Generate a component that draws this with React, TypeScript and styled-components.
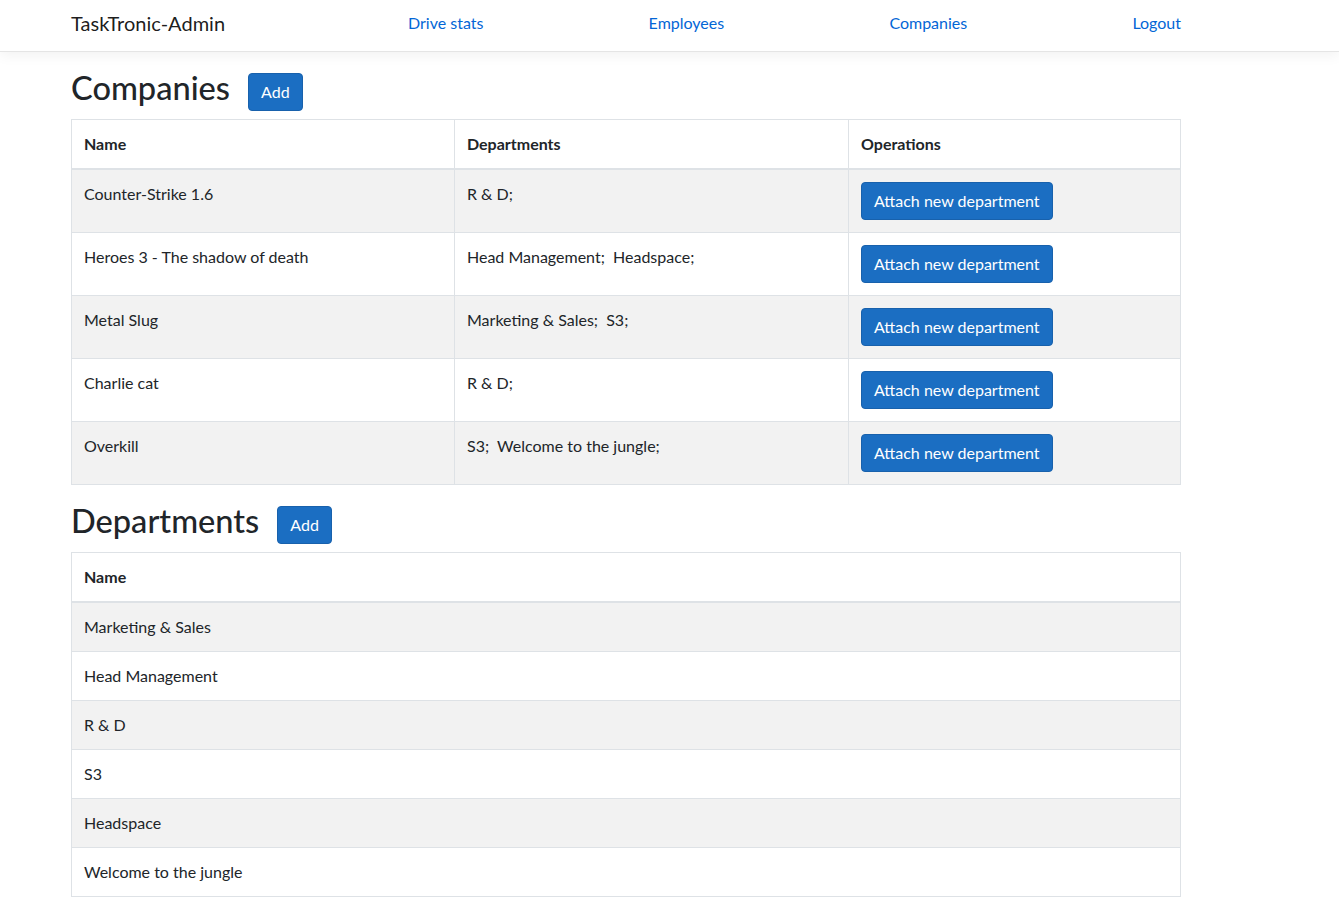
import styled, { createGlobalStyle } from 'styled-components';

const GlobalStyle = createGlobalStyle`
  body {
    margin: 0;
    background: #fff;
    color: #212529;
    font-family: Lato, "Noto Sans", sans-serif;
    font-size: 16px;
    line-height: 1.5;
  }
  * {
    box-sizing: border-box;
  }
`;

const NavBar = styled.header`
  height: 52px;
  border-bottom: 1px solid #e5e5e5;
  box-shadow: 0 4px 12px rgba(0, 0, 0, 0.05);
  background: #fff;
`;

const NavInner = styled.div`
  display: flex;
  align-items: center;
  width: 1110px;
  height: 100%;
  margin-left: 71px;
  padding-bottom: 5px;
`;

const Brand = styled.a`
  font-size: 20px;
  color: rgba(0, 0, 0, 0.9);
  text-decoration: none;
  width: 337px;
  flex-shrink: 0;
`;

const NavList = styled.nav`
  flex: 1;
  display: flex;
  justify-content: space-between;
`;

const NavLink = styled.a`
  color: #0366d6;
  text-decoration: none;
  font-size: 16px;
`;

const Main = styled.main`
  width: 1110px;
  margin-left: 71px;
  padding-top: 21px;
`;

const SectionHeader = styled.div<{ $first?: boolean }>`
  display: flex;
  align-items: flex-start;
  gap: 18px;
  margin-top: ${(p) => (p.$first ? '0' : '21px')};
  margin-bottom: 8px;
`;

const Title = styled.h2`
  margin: -4px 0 0;
  font-size: 32.6px;
  font-weight: 500;
  line-height: 38px;
`;

const PrimaryButton = styled.button`
  font-family: inherit;
  font-size: 16px;
  line-height: 24px;
  padding: 6px 12px;
  color: #fff;
  background-color: #1b6ec2;
  border: 1px solid #1861ac;
  border-radius: 4px;
  cursor: pointer;
  white-space: nowrap;
`;

const Table = styled.table`
  width: 100%;
  border-collapse: collapse;
  border: 1px solid #dee2e6;
  table-layout: fixed;
`;

const Th = styled.th<{ $w?: number }>`
  width: ${(p) => (p.$w ? `${p.$w}px` : 'auto')};
  text-align: left;
  font-weight: 700;
  padding: 12px;
  border: 1px solid #dee2e6;
  border-bottom-width: 2px;
  vertical-align: bottom;
`;

const Row = styled.tr`
  &:nth-child(odd) {
    background-color: #f2f2f2;
  }
`;

const Td = styled.td`
  padding: 12px;
  border: 1px solid #dee2e6;
  vertical-align: top;
`;

const companies = [
  { name: 'Counter-Strike 1.6', departments: ['R & D'] },
  { name: 'Heroes 3 - The shadow of death', departments: ['Head Management', 'Headspace'] },
  { name: 'Metal Slug', departments: ['Marketing & Sales', 'S3'] },
  { name: 'Charlie cat', departments: ['R & D'] },
  { name: 'Overkill', departments: ['S3', 'Welcome to the jungle'] },
];

const departments = [
  'Marketing & Sales',
  'Head Management',
  'R & D',
  'S3',
  'Headspace',
  'Welcome to the jungle',
];

export default function App() {
  return (
    <>
      <GlobalStyle />
      <NavBar>
        <NavInner>
          <Brand href="#">TaskTronic-Admin</Brand>
          <NavList>
            <NavLink href="#">Drive stats</NavLink>
            <NavLink href="#">Employees</NavLink>
            <NavLink href="#">Companies</NavLink>
            <NavLink href="#">Logout</NavLink>
          </NavList>
        </NavInner>
      </NavBar>
      <Main>
        <SectionHeader $first>
          <Title>Companies</Title>
          <PrimaryButton>Add</PrimaryButton>
        </SectionHeader>
        <Table>
          <thead>
            <tr>
              <Th $w={383}>Name</Th>
              <Th $w={394}>Departments</Th>
              <Th>Operations</Th>
            </tr>
          </thead>
          <tbody>
            {companies.map((c) => (
              <Row key={c.name}>
                <Td>{c.name}</Td>
                <Td>{c.departments.map((d) => `${d};\u00a0 `).join('')}</Td>
                <Td>
                  <PrimaryButton>Attach new department</PrimaryButton>
                </Td>
              </Row>
            ))}
          </tbody>
        </Table>
        <SectionHeader>
          <Title>Departments</Title>
          <PrimaryButton>Add</PrimaryButton>
        </SectionHeader>
        <Table>
          <thead>
            <tr>
              <Th>Name</Th>
            </tr>
          </thead>
          <tbody>
            {departments.map((d) => (
              <Row key={d}>
                <Td>{d}</Td>
              </Row>
            ))}
          </tbody>
        </Table>
      </Main>
    </>
  );
}
